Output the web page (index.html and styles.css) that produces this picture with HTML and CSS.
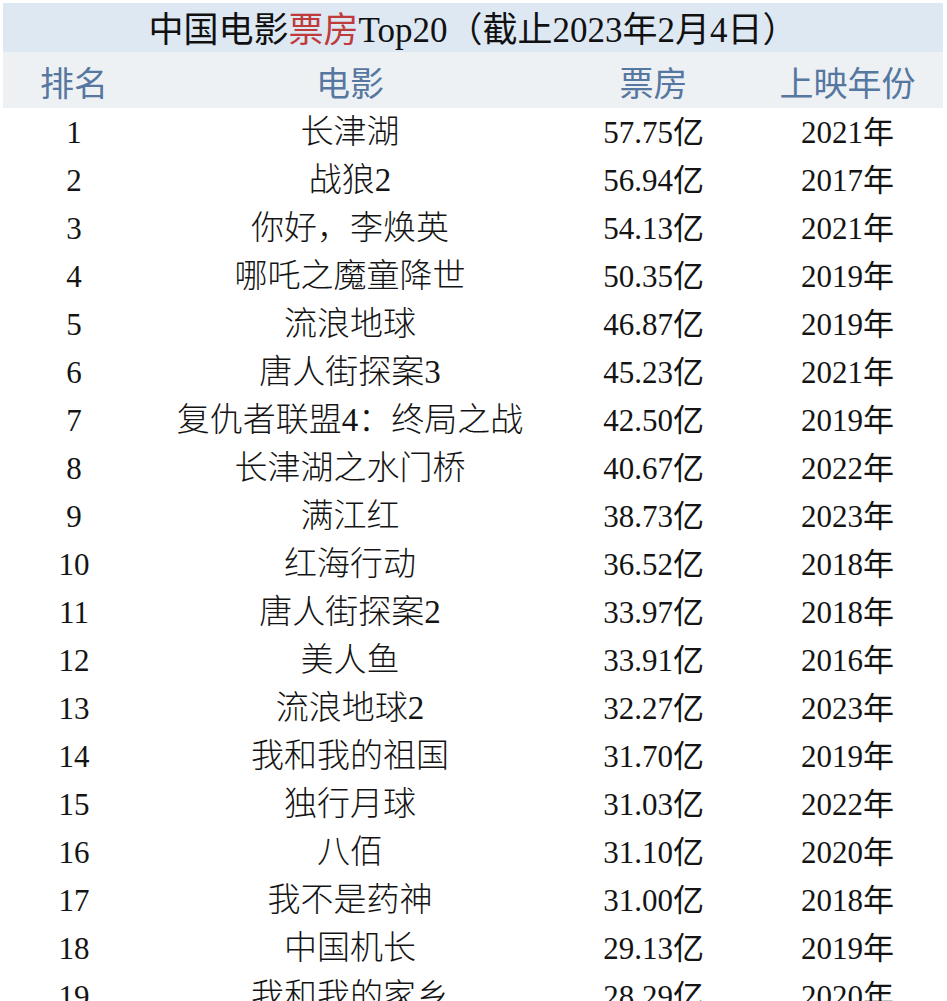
FILE: index.html
```html
<!DOCTYPE html>
<html lang="zh-CN">
<head>
<meta charset="utf-8">
<title>中国电影票房Top20</title>
<link rel="stylesheet" href="styles.css">
</head>
<body>
<div class="sheet">
  <div class="title">中国电影<span class="red">票房</span>Top20（截止2023年2月4日）</div>
  <div class="row head">
    <div class="c rank">排名</div>
    <div class="c movie">电影</div>
    <div class="c box">票房</div>
    <div class="c year">上映年份</div>
  </div>
  <div class="row"><div class="c rank">1</div><div class="c movie">长津湖</div><div class="c box">57.75亿</div><div class="c year">2021年</div></div>
  <div class="row"><div class="c rank">2</div><div class="c movie">战狼2</div><div class="c box">56.94亿</div><div class="c year">2017年</div></div>
  <div class="row"><div class="c rank">3</div><div class="c movie">你好，李焕英</div><div class="c box">54.13亿</div><div class="c year">2021年</div></div>
  <div class="row"><div class="c rank">4</div><div class="c movie">哪吒之魔童降世</div><div class="c box">50.35亿</div><div class="c year">2019年</div></div>
  <div class="row"><div class="c rank">5</div><div class="c movie">流浪地球</div><div class="c box">46.87亿</div><div class="c year">2019年</div></div>
  <div class="row"><div class="c rank">6</div><div class="c movie">唐人街探案3</div><div class="c box">45.23亿</div><div class="c year">2021年</div></div>
  <div class="row"><div class="c rank">7</div><div class="c movie">复仇者联盟4：终局之战</div><div class="c box">42.50亿</div><div class="c year">2019年</div></div>
  <div class="row"><div class="c rank">8</div><div class="c movie">长津湖之水门桥</div><div class="c box">40.67亿</div><div class="c year">2022年</div></div>
  <div class="row"><div class="c rank">9</div><div class="c movie">满江红</div><div class="c box">38.73亿</div><div class="c year">2023年</div></div>
  <div class="row"><div class="c rank">10</div><div class="c movie">红海行动</div><div class="c box">36.52亿</div><div class="c year">2018年</div></div>
  <div class="row"><div class="c rank">11</div><div class="c movie">唐人街探案2</div><div class="c box">33.97亿</div><div class="c year">2018年</div></div>
  <div class="row"><div class="c rank">12</div><div class="c movie">美人鱼</div><div class="c box">33.91亿</div><div class="c year">2016年</div></div>
  <div class="row"><div class="c rank">13</div><div class="c movie">流浪地球2</div><div class="c box">32.27亿</div><div class="c year">2023年</div></div>
  <div class="row"><div class="c rank">14</div><div class="c movie">我和我的祖国</div><div class="c box">31.70亿</div><div class="c year">2019年</div></div>
  <div class="row"><div class="c rank">15</div><div class="c movie">独行月球</div><div class="c box">31.03亿</div><div class="c year">2022年</div></div>
  <div class="row"><div class="c rank">16</div><div class="c movie">八佰</div><div class="c box">31.10亿</div><div class="c year">2020年</div></div>
  <div class="row"><div class="c rank">17</div><div class="c movie">我不是药神</div><div class="c box">31.00亿</div><div class="c year">2018年</div></div>
  <div class="row"><div class="c rank">18</div><div class="c movie">中国机长</div><div class="c box">29.13亿</div><div class="c year">2019年</div></div>
  <div class="row"><div class="c rank">19</div><div class="c movie">我和我的家乡</div><div class="c box">28.29亿</div><div class="c year">2020年</div></div>
</div>
</body>
</html>
```

FILE: styles.css
```css
html, body {
  margin: 0;
  padding: 0;
  background: #ffffff;
  overflow: hidden;
}

body {
  font-family: "Liberation Serif", "Noto Sans CJK SC", serif;
  color: #141414;
}

.sheet {
  padding: 3px 4px 0 3px;
}

.title {
  height: 49px;
  box-sizing: border-box;
  padding: 6px 0 0 0;
  background: #dde8f3;
  display: flex;
  align-items: center;
  justify-content: center;
  font-size: 35px;
  line-height: 1;
  font-weight: 400;
  color: #111111;
}

.red {
  color: #bf3b3b;
}

.row {
  display: grid;
  grid-template-columns: 142px 410px 197px 191px;
  height: 48px;
  align-items: center;
  font-size: 31px;
  line-height: 1;
}

.row.head {
  height: 56px;
  box-sizing: border-box;
  padding-top: 10px;
  background: #eef1f4;
  color: #5677a0;
  font-size: 34px;
}

.c {
  text-align: center;
  white-space: nowrap;
}

.movie {
  font-size: 33px;
  font-weight: 300;
}

.head .c,
.head .movie {
  font-size: 34px;
  font-weight: 400;
}
```
